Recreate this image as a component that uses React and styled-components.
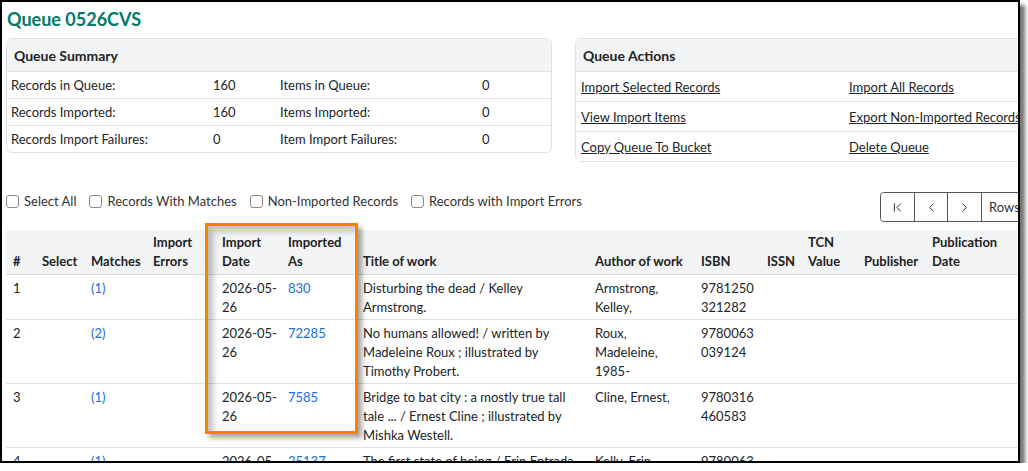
import React from "react";
import styled, { createGlobalStyle } from "styled-components";
import { ChevronFirst, ChevronLeft, ChevronRight } from "lucide-react";

const GlobalStyle = createGlobalStyle`
  body {
    margin: 0;
    background: #fff;
    font-family: Lato, "Liberation Sans", sans-serif;
    color: #212529;
  }
`;

const Frame = styled.div`
  width: 1016px;
  height: 459px;
  border: 2px solid #000;
  box-shadow: 5px 5px 4px rgba(0, 0, 0, 0.55);
  overflow: hidden;
  background: #fff;
`;

const Page = styled.div`
  width: 1056px;
  padding: 0 4px;
  font-size: 13px;
`;

const Title = styled.h2`
  margin: 0;
  padding: 6px 0 0 1px;
  height: 30px;
  box-sizing: border-box;
  font-size: 18px;
  line-height: 22px;
  font-weight: 700;
  color: #00796b;
`;

const CardRow = styled.div`
  display: grid;
  grid-template-columns: 546px 1fr;
  column-gap: 23px;
  align-items: start;
  margin-top: 6px;
`;

const Card = styled.div`
  border: 1px solid #dee2e6;
  border-radius: 6px;
  overflow: hidden;
`;

const CardHeader = styled.div`
  height: 32px;
  display: flex;
  align-items: center;
  padding: 0 7px;
  background: #f3f4f6;
  border-bottom: 1px solid #dee2e6;
  font-size: 14px;
  font-weight: 700;
  color: #222;
`;

const InfoRow = styled.div`
  display: grid;
  grid-template-columns: ${(p) => p.columns};
  height: ${(p) => p.height}px;
  align-items: center;
  & + & {
    border-top: 1px solid #dee2e6;
  }
`;

const Cell = styled.span`
  padding-left: 4px;
`;

const ActionLink = styled.a`
  padding-left: 5px;
  color: #212529;
  text-decoration: underline;
  white-space: nowrap;
  cursor: pointer;
`;

const Toolbar = styled.div`
  display: flex;
  justify-content: space-between;
  align-items: flex-start;
  margin-top: 30px;
  height: 30px;
`;

const Filters = styled.div`
  display: flex;
  gap: 13px;
  padding-top: 2px;
`;

const Filter = styled.label`
  display: flex;
  align-items: center;
  gap: 5px;
  color: #333;
  line-height: 14px;
`;

const Box = styled.span`
  width: 13px;
  height: 13px;
  box-sizing: border-box;
  border: 1px solid #8a8a8a;
  border-radius: 3px;
  background: #fff;
`;

const Pager = styled.div`
  display: flex;
  height: 30px;
  border: 1px solid #555;
  border-radius: 4px 0 0 4px;
  box-sizing: border-box;
`;

const PageButton = styled.button`
  width: ${(p) => p.width || 33}px;
  height: 28px;
  padding: ${(p) => (p.text ? "0 0 0 7px" : "0")};
  display: flex;
  align-items: center;
  justify-content: ${(p) => (p.text ? "flex-start" : "center")};
  gap: 4px;
  background: #fff;
  border: none;
  border-left: ${(p) => (p.first ? "none" : "1px solid #555")};
  border-radius: ${(p) => (p.first ? "4px 0 0 4px" : "0")};
  font-family: inherit;
  font-size: 13px;
  color: #333;
`;

const TableWrap = styled.div`
  position: relative;
  margin-top: 8px;
`;

const Table = styled.table`
  width: 100%;
  table-layout: fixed;
  border-collapse: collapse;
  line-height: 19px;
`;

const Th = styled.th`
  padding: 3px 5px;
  text-align: left;
  vertical-align: bottom;
  font-weight: 700;
  color: #222;
  background: #f3f4f6;
  border-bottom: 1px solid #d6d9dc;
  white-space: nowrap;
  &:first-child {
    padding-left: 7px;
  }
`;

const Td = styled.td`
  padding: 4px 5px 2px;
  vertical-align: top;
  border-bottom: 1px solid #dee2e6;
  white-space: nowrap;
  &:first-child {
    padding-left: 7px;
  }
`;

const Link = styled.a`
  color: #1a6ee0;
  text-decoration: none;
  cursor: pointer;
`;

const Highlight = styled.div`
  position: absolute;
  left: 199px;
  top: -7px;
  width: 153px;
  height: 211px;
  box-sizing: border-box;
  border: 3px solid #ff8000;
  box-shadow: 4px 4px 5px rgba(0, 0, 0, 0.35),
    inset 5px 5px 6px rgba(0, 0, 0, 0.25);
  pointer-events: none;
`;

const summary = [
  ["Records in Queue:", "160", "Items in Queue:", "0"],
  ["Records Imported:", "160", "Items Imported:", "0"],
  ["Records Import Failures:", "0", "Item Import Failures:", "0"],
];

const actions = [
  ["Import Selected Records", "Import All Records"],
  ["View Import Items", "Export Non-Imported Records"],
  ["Copy Queue To Bucket", "Delete Queue"],
];

const filters = [
  "Select All",
  "Records With Matches",
  "Non-Imported Records",
  "Records with Import Errors",
];

const columns = [
  { label: ["#"], width: 31 },
  { label: ["Select"], width: 49 },
  { label: ["Matches"], width: 62 },
  { label: ["Import", "Errors"], width: 69 },
  { label: ["Import", "Date"], width: 66 },
  { label: ["Imported", "As"], width: 75 },
  { label: ["Title of work"], width: 232 },
  { label: ["Author of work"], width: 106 },
  { label: ["ISBN"], width: 66 },
  { label: ["ISSN"], width: 41 },
  { label: ["TCN", "Value"], width: 56 },
  { label: ["Publisher"], width: 68 },
  { label: ["Publication", "Date"] },
];

const records = [
  {
    id: 1,
    matches: 1,
    date: ["2026-05-", "26"],
    as: "830",
    title: ["Disturbing the dead / Kelley", "Armstrong."],
    author: ["Armstrong,", "Kelley,"],
    isbn: ["9781250", "321282"],
  },
  {
    id: 2,
    matches: 2,
    date: ["2026-05-", "26"],
    as: "72285",
    title: [
      "No humans allowed! / written by",
      "Madeleine Roux ; illustrated by",
      "Timothy Probert.",
    ],
    author: ["Roux,", "Madeleine,", "1985-"],
    isbn: ["9780063", "039124"],
  },
  {
    id: 3,
    matches: 1,
    date: ["2026-05-", "26"],
    as: "7585",
    title: [
      "Bridge to bat city : a mostly true tall",
      "tale ... / Ernest Cline ; illustrated by",
      "Mishka Westell.",
    ],
    author: ["Cline, Ernest,"],
    isbn: ["9780316", "460583"],
  },
  {
    id: 4,
    matches: 1,
    date: ["2026-05-", "26"],
    as: "25137",
    title: ["The first state of being / Erin Entrada", "Kelly."],
    author: ["Kelly, Erin", "Entrada,"],
    isbn: ["9780063", "275409"],
  },
];

function Lines({ lines }) {
  return lines.map((line, i) => (
    <React.Fragment key={i}>
      {i > 0 && <br />}
      {line}
    </React.Fragment>
  ));
}

export default function App() {
  return (
    <>
      <GlobalStyle />
      <Frame>
        <Page>
          <Title>Queue 0526CVS</Title>

          <CardRow>
            <Card>
              <CardHeader>Queue Summary</CardHeader>
              {summary.map((row, i) => (
                <InfoRow key={i} columns="202px 67px 202px 1fr" height={26}>
                  {row.map((text, j) => (
                    <Cell key={j}>{text}</Cell>
                  ))}
                </InfoRow>
              ))}
            </Card>

            <Card>
              <CardHeader>Queue Actions</CardHeader>
              {actions.map((row, i) => (
                <InfoRow key={i} columns="268px 1fr" height={29}>
                  {row.map((text) => (
                    <span key={text}>
                      <ActionLink>{text}</ActionLink>
                    </span>
                  ))}
                </InfoRow>
              ))}
            </Card>
          </CardRow>

          <Toolbar>
            <Filters>
              {filters.map((f) => (
                <Filter key={f}>
                  <Box />
                  {f}
                </Filter>
              ))}
            </Filters>
            <Pager>
              <PageButton first>
                <ChevronFirst size={15} strokeWidth={1.6} />
              </PageButton>
              <PageButton>
                <ChevronLeft size={15} strokeWidth={1.6} />
              </PageButton>
              <PageButton width={34}>
                <ChevronRight size={15} strokeWidth={1.6} />
              </PageButton>
              <PageButton text width={80}>
                Rows 25 ▾
              </PageButton>
            </Pager>
          </Toolbar>

          <TableWrap>
            <Table>
              <colgroup>
                {columns.map((c, i) => (
                  <col key={i} style={c.width ? { width: c.width } : undefined} />
                ))}
              </colgroup>
              <thead>
                <tr>
                  {columns.map((c, i) => (
                    <Th key={i}>
                      <Lines lines={c.label} />
                    </Th>
                  ))}
                </tr>
              </thead>
              <tbody>
                {records.map((r) => (
                  <tr key={r.id}>
                    <Td>{r.id}</Td>
                    <Td />
                    <Td>
                      <Link>({r.matches})</Link>
                    </Td>
                    <Td />
                    <Td>
                      <Lines lines={r.date} />
                    </Td>
                    <Td>
                      <Link>{r.as}</Link>
                    </Td>
                    <Td>
                      <Lines lines={r.title} />
                    </Td>
                    <Td>
                      <Lines lines={r.author} />
                    </Td>
                    <Td>
                      <Lines lines={r.isbn} />
                    </Td>
                    <Td />
                    <Td />
                    <Td />
                    <Td />
                  </tr>
                ))}
              </tbody>
            </Table>
            <Highlight />
          </TableWrap>
        </Page>
      </Frame>
    </>
  );
}
